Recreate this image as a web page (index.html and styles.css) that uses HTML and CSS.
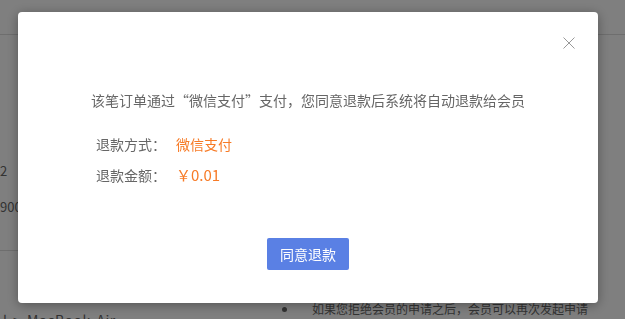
FILE: index.html
```html
<!DOCTYPE html>
<html lang="zh-CN">
<head>
<meta charset="utf-8">
<title>退款</title>
<link rel="stylesheet" href="styles.css">
</head>
<body>
<div class="page">
  <div class="topbar"></div>
  <div class="content">
    <div class="left-col">
      <div class="info-block">
        <div class="info-line">2</div>
        <div class="info-line">900</div>
      </div>
      <div class="crumb">l &gt; MacBook Air</div>
    </div>
    <div class="right-col">
      <ul class="notes">
        <li>如果您拒绝会员的申请之后，会员可以再次发起申请</li>
      </ul>
    </div>
  </div>
</div>
<div class="mask"></div>
<div class="dialog">
  <button class="close" aria-label="关闭">
    <svg width="12" height="12" viewBox="0 0 12 12"><path d="M0.5 0.5L11.5 11.5M11.5 0.5L0.5 11.5" stroke="#999" stroke-width="1" fill="none"/></svg>
  </button>
  <p class="message">该笔订单通过“微信支付”支付，您同意退款后系统将自动退款给会员</p>
  <div class="rows">
    <div class="row"><span class="label">退款方式：</span><span class="value">微信支付</span></div>
    <div class="row"><span class="label">退款金额：</span><span class="value amount">￥0.01</span></div>
  </div>
  <div class="actions">
    <button class="btn-primary">同意退款</button>
  </div>
</div>
</body>
</html>
```
FILE: styles.css
```css
* { box-sizing: border-box; }
html, body { margin: 0; padding: 0; }
body {
  font-family: "Noto Sans CJK SC", "Noto Sans", sans-serif;
  font-size: 14px;
  color: #666;
  background: #fff;
  width: 625px;
  height: 319px;
  overflow: hidden;
}
.page { height: 319px; overflow: hidden; }
.topbar { height: 35px; border-bottom: 1px solid #ddd; }
.content { display: grid; grid-template-columns: 260px 1fr; }
.left-col { display: flex; flex-direction: column; }
.info-block {
  padding-top: 126px;
  padding-bottom: 33px;
  border-bottom: 1px solid #ddd;
  display: flex;
  flex-direction: column;
  gap: 16px;
}
.info-line { line-height: 20px; font-size: 13px; color: #666; }
.crumb { margin-top: 59px; line-height: 20px; font-size: 14px; color: #666; padding-left: 3px; word-spacing: 2px; letter-spacing: 0.5px; }
.right-col { padding-top: 264px; }
.notes { margin: 0; padding-left: 38px; color: #666; font-size: 12px; line-height: 20px; }
.notes li { padding-left: 14px; }
.mask {
  position: fixed;
  inset: 0;
  background: rgba(0, 0, 0, 0.5);
}
.dialog {
  position: fixed;
  left: 18px;
  top: 12px;
  width: 580px;
  height: 291px;
  background: #fff;
  border-radius: 4px;
  box-shadow: 0 2px 12px rgba(0, 0, 0, 0.35);
  padding: 78px 0 0 0;
  display: flex;
  flex-direction: column;
}
.close {
  position: absolute;
  right: 23px;
  top: 25px;
  width: 12px;
  height: 12px;
  padding: 0;
  border: 0;
  background: none;
  display: flex;
}
.message {
  margin: 0;
  text-align: center;
  line-height: 20px;
  color: #666;
  font-size: 14px;
}
.rows {
  margin-top: 24px;
  padding-left: 78px;
  display: flex;
  flex-direction: column;
  gap: 11px;
}
.row { display: flex; line-height: 20px; }
.label { width: 80px; color: #666; }
.value { color: #f77b27; }
.amount { font-size: 15px; }
.actions { margin-top: 53px; display: flex; justify-content: center; }
.btn-primary {
  width: 82px;
  height: 32px;
  border: 0;
  border-radius: 2px;
  background: #5a80e4;
  color: #fff;
  font-family: inherit;
  font-size: 14px;
  padding: 0;
  margin-left: 0;
}
```
